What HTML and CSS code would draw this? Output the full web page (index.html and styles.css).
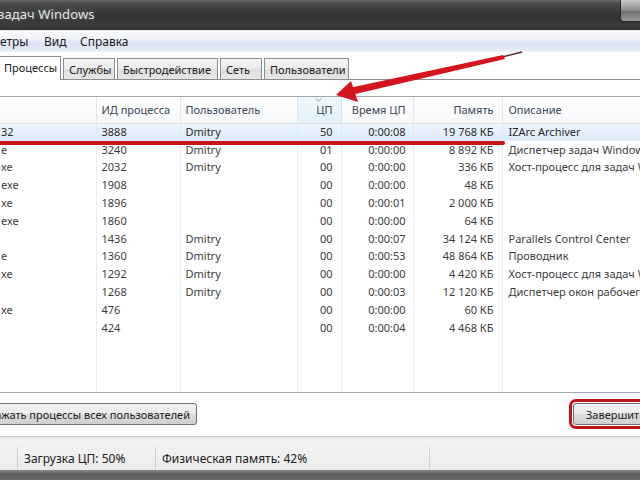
FILE: index.html
```html
<!DOCTYPE html>
<html lang="ru">
<head>
<meta charset="utf-8">
<title>Диспетчер задач Windows</title>
<link rel="stylesheet" href="styles.css">
</head>
<body>
<div class="window">
  <div class="titlebar">
    <span class="title">задач Windows</span>
    <span class="minbtn"></span>
  </div>
  <div class="menubar">
    <span class="menu m-first">етры</span>
    <span class="menu m-view">Вид</span>
    <span class="menu m-help">Справка</span>
  </div>
  <div class="tabs">
    <div class="tab active t1">Процессы</div>
    <div class="tab t2">Службы</div>
    <div class="tab t3">Быстродействие</div>
    <div class="tab t4">Сеть</div>
    <div class="tab t5">Пользователи</div>
  </div>
  <div class="panel">
    <div class="list">
      <table class="grid">
        <colgroup>
          <col class="c-name"><col class="c-pid"><col class="c-user"><col class="c-cpu"><col class="c-time"><col class="c-mem"><col class="c-desc">
        </colgroup>
        <thead>
          <tr>
            <th class="l">&nbsp;</th>
            <th class="l">ИД процесса</th>
            <th class="l">Пользователь</th>
            <th class="r sorted"><svg class="sort" width="7" height="4" viewBox="0 0 7 4"><path d="M0.5 0.5 L3.5 3.2 L6.5 0.5" fill="none" stroke="#8aa0b8" stroke-width="1"/></svg>ЦП</th>
            <th class="r">Время ЦП</th>
            <th class="r">Память</th>
            <th class="l">Описание</th>
          </tr>
        </thead>
        <tbody>
          <tr class="sel"><td class="name">32</td><td>3888</td><td>Dmitry</td><td class="r">50</td><td class="r">0:00:08</td><td class="r">19 768 КБ</td><td>IZArc Archiver</td></tr>
          <tr><td class="name">e</td><td>3240</td><td>Dmitry</td><td class="r">01</td><td class="r">0:00:00</td><td class="r">8 892 КБ</td><td>Диспетчер задач Windows</td></tr>
          <tr><td class="name">xe</td><td>2032</td><td>Dmitry</td><td class="r">00</td><td class="r">0:00:00</td><td class="r">336 КБ</td><td>Хост-процесс для задач Windows</td></tr>
          <tr><td class="name">exe</td><td>1908</td><td></td><td class="r">00</td><td class="r">0:00:00</td><td class="r">48 КБ</td><td></td></tr>
          <tr><td class="name">xe</td><td>1896</td><td></td><td class="r">00</td><td class="r">0:00:01</td><td class="r">2 000 КБ</td><td></td></tr>
          <tr><td class="name">exe</td><td>1860</td><td></td><td class="r">00</td><td class="r">0:00:00</td><td class="r">64 КБ</td><td></td></tr>
          <tr><td class="name"></td><td>1436</td><td>Dmitry</td><td class="r">00</td><td class="r">0:00:07</td><td class="r">34 124 КБ</td><td>Parallels Control Center</td></tr>
          <tr><td class="name">e</td><td>1360</td><td>Dmitry</td><td class="r">00</td><td class="r">0:00:53</td><td class="r">48 864 КБ</td><td>Проводник</td></tr>
          <tr><td class="name">xe</td><td>1292</td><td>Dmitry</td><td class="r">00</td><td class="r">0:00:00</td><td class="r">4 420 КБ</td><td>Хост-процесс для задач Windows</td></tr>
          <tr><td class="name"></td><td>1268</td><td>Dmitry</td><td class="r">00</td><td class="r">0:00:03</td><td class="r">12 120 КБ</td><td>Диспетчер окон рабочего стола</td></tr>
          <tr><td class="name">xe</td><td>476</td><td></td><td class="r">00</td><td class="r">0:00:00</td><td class="r">60 КБ</td><td></td></tr>
          <tr><td class="name"></td><td>424</td><td></td><td class="r">00</td><td class="r">0:00:04</td><td class="r">4 468 КБ</td><td></td></tr>
          <tr class="filler"><td></td><td></td><td></td><td></td><td></td><td></td><td></td></tr>
        </tbody>
      </table>
    </div>
    <div class="actions">
      <button class="btn btn-all"><span>Отображать процессы всех пользователей</span></button>
      <button class="btn btn-end">Завершить процесс</button>
    </div>
  </div>
  <div class="status">
    <div class="cell s0"></div>
    <div class="cell s1">Загрузка ЦП: 50%</div>
    <div class="cell s2">Физическая память: 42%</div>
    <div class="cell s3"></div>
  </div>
  <div class="taskbar"></div>
</div>
<div class="redline"></div>
<svg class="arrow" width="640" height="480" viewBox="0 0 640 480">
  <path d="M502 57 L522 52" stroke="#5a2a2a" stroke-width="1.5" fill="none"/>
  <polygon points="349,88 503,55 505,59 351,95" fill="#d3161d"/>
  <polygon points="336,95 351,81 358,102" fill="#d3161d"/>
</svg>
</body>
</html>
```
FILE: styles.css
```css
* { box-sizing: border-box; }
html, body {
  margin: 0;
  padding: 0;
  width: 640px;
  height: 480px;
  overflow: hidden;
  background: #fff;
  font-family: "Noto Sans", "Open Sans", sans-serif;
  font-size: 11px;
  color: #3a3a3a;
}
.window {
  width: 640px;
  height: 480px;
  display: flex;
  flex-direction: column;
  overflow: hidden;
}
.titlebar {
  height: 30px;
  flex: none;
  display: flex;
  align-items: center;
  justify-content: space-between;
  background: linear-gradient(180deg, #6a6c6a 0px, #4a4c4a 3px, #2f322f 16px, #3a3d3b 26px, #2c2f2c 30px);
  position: relative;
}
.title {
  margin-left: -2px;
  margin-top: -2px;
  font-size: 13px;
  color: #e4e4e4;
  text-shadow: 0 0 6px rgba(255,255,255,0.35);
  letter-spacing: 0.1px;
}
.minbtn {
  align-self: flex-start;
  width: 20px;
  height: 22px;
  margin-top: 0;
  border: 1px solid #2a2a2a;
  border-top: none;
  border-right: none;
  border-radius: 0 0 0 4px;
  background: linear-gradient(180deg, #c8c8c8, #8a8a8a 50%, #6c6c6c 51%, #9a9a9a);
}
.menubar {
  height: 22px;
  flex: none;
  display: flex;
  align-items: center;
  font-size: 12px;
  color: #1e1e1e;
  border-top: 1px solid #e8e8e8;
  background: linear-gradient(180deg, #f8f9fb 0%, #f2f4f8 35%, #dde4f3 55%, #dfe6f4 80%, #eef1f7 100%);
}
.menu { display: inline-block; }
.m-first { margin-left: 0; width: 44px; }
.m-view { width: 36px; }
.tabs {
  margin-top: 4px;
  height: 24px;
  flex: none;
  display: flex;
  align-items: flex-end;
  border-bottom: 1px solid #8c8e94;
  padding-left: 0;
}
.tab {
  height: 21px;
  display: flex;
  align-items: center;
  padding: 0 5px;
  font-size: 11px;
  color: #222;
  border: 1px solid #8c8e94;
  border-bottom: none;
  margin-right: 2px;
  background: linear-gradient(180deg, #f4f4f4, #ebebeb 50%, #dddddd 51%, #e6e6e6);
  margin-bottom: 0;
}
.tab.active {
  height: 24px;
  background: #fff;
  margin-bottom: -1px;
  margin-left: -1px;
  padding-left: 4px;
  width: 62px;
  padding-bottom: 2px;
}
.t2 { width: 52px; }
.t3 { width: 101px; }
.t4 { width: 42px; }
.t5 { width: 85px; }
.panel {
  flex: 1;
  display: flex;
  flex-direction: column;
  background: #fff;
}
.list {
  margin-top: 16px;
  height: 297px;
  width: 700px;
  border-top: 1px solid #a4a8ae;
  border-bottom: 1px solid #a4a8ae;
  overflow: hidden;
}
.grid {
  table-layout: fixed;
  border-collapse: collapse;
  width: 700px;
  height: 100%;
}
.c-name { width: 96px; }
.c-pid { width: 84px; }
.c-user { width: 117px; }
.c-cpu { width: 44px; }
.c-time { width: 72px; }
.c-mem { width: 89px; }
.grid th {
  height: 26px;
  font-weight: normal;
  color: #3a4656;
  padding: 0 5px;
  white-space: nowrap;
  background: linear-gradient(180deg, #ffffff, #f7f8fa);
  border-right: 1px solid #e4e6ea;
  border-bottom: 1px solid #e0e2e6;
  vertical-align: middle;
}
.grid th.l { text-align: left; }
.grid th.r { text-align: right; }
.grid th.sorted {
  position: relative;
  background: linear-gradient(180deg, #eef7fc, #e1f0f9);
  border-left: 1px solid #cde4f2;
  border-right: 1px solid #cde4f2;
  padding-right: 8px;
}
.sort {
  position: absolute;
  left: 17px;
  top: 1px;
}
.grid td {
  height: 17.8px;
  padding: 0 5px;
  white-space: nowrap;
  overflow: hidden;
  border-right: 1px solid #ededed;
  color: #3c3c3c;
  line-height: 14px;
}
.grid td.name { padding-left: 1px; }
.grid td.r { text-align: right; }
.grid td:nth-child(4) { padding-right: 8px; }
.grid th:nth-child(5), .grid td:nth-child(5) { padding-right: 7px; }
.grid th:nth-child(6), .grid td:nth-child(6) { padding-right: 8px; }
.grid th:nth-child(7), .grid td:nth-child(7) { padding-left: 6px; }
.grid tr.sel td {
  background: linear-gradient(180deg, #eef5fd, #dae9f8);
  border-top: 1px solid #b4d4f2;
  border-right-color: #dae9f8;
  color: #2a2a2a;
}
.grid tr.filler td { height: auto; }
.actions {
  height: 44px;
  flex: none;
  display: flex;
  justify-content: space-between;
  align-items: flex-start;
  padding-top: 10px;
  border-bottom: 1px solid #c9cbcf;
}
.btn {
  height: 22px;
  font-family: inherit;
  font-size: 11px;
  color: #1e1e1e;
  border: 1px solid #707070;
  border-radius: 3px;
  background: linear-gradient(180deg, #f2f2f2, #ebebeb 50%, #dddddd 51%, #cfcfcf);
  padding: 0 6px;
  white-space: nowrap;
  display: flex;
  align-items: center;
}
.btn-all {
  width: 204px;
  margin-left: -7px;
  justify-content: flex-end;
  overflow: hidden;
  padding-right: 6px;
}
.btn-all span { flex: none; }
.btn-end {
  width: 100px;
  margin-right: -33px;
  padding-left: 12px;
  outline: 3px solid #c0141b;
  outline-offset: 1px;
}
.status {
  height: 33px;
  flex: none;
  display: flex;
  align-items: flex-end;
  border-top: 2px solid #eaeaea;
  background: linear-gradient(180deg, #f3f3f3, #ececec);
  font-size: 12px;
  color: #222;
}
.cell {
  height: 23px;
  display: flex;
  align-items: center;
  border-right: 1px solid #cfcfcf;
  padding-left: 6px;
}
.s0 { width: 18px; }
.s1 { width: 138px; }
.s2 { width: 274px; }
.s3 { flex: 1; border-right: none; }
.taskbar {
  height: 10px;
  flex: none;
  background: linear-gradient(180deg, #8a8a8a, #5c5c5c 40%, #6a6a6a);
}
.redline {
  position: absolute;
  left: 0;
  top: 141px;
  width: 505px;
  height: 4px;
  background: #c8131b;
  border-radius: 0 2px 2px 0;
}
.arrow {
  position: absolute;
  left: 0;
  top: 0;
  pointer-events: none;
}
```
